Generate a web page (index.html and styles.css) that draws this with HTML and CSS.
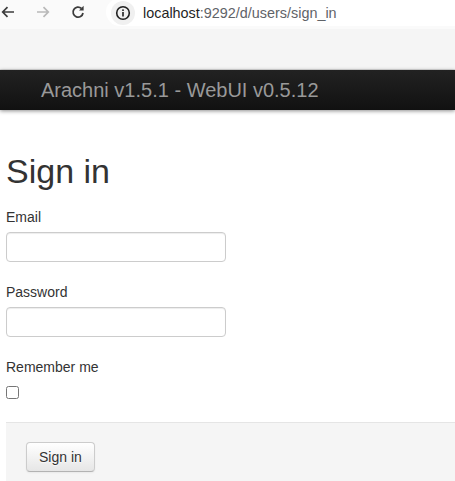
FILE: index.html
```html
<!DOCTYPE html>
<html lang="en">
<head>
<meta charset="utf-8">
<title>Sign in</title>
<link rel="stylesheet" href="styles.css">
</head>
<body>
<div class="toolbar">
  <div class="nav-buttons">
    <svg class="ico" width="16" height="16" viewBox="0 0 16 16"><path d="M14 8H3M7.5 3.2L2.7 8l4.8 4.8" fill="none" stroke="#3c3c3c" stroke-width="1.7"/></svg>
    <svg class="ico fwd" width="16" height="16" viewBox="0 0 16 16"><path d="M2 8h11M8.5 3.2L13.3 8l-4.8 4.8" fill="none" stroke="#b9b9b9" stroke-width="1.7"/></svg>
    <svg class="ico" width="16" height="16" viewBox="0 0 16 16"><path d="M13 9a5 5 0 1 1-1.6-4.6" fill="none" stroke="#3c3c3c" stroke-width="1.8"/><path d="M13.6 1.8v4.6H9z" fill="#3c3c3c"/></svg>
  </div>
  <div class="omnibox">
    <span class="info"><svg width="16" height="16" viewBox="0 0 16 16"><circle cx="8" cy="8" r="6.3" fill="none" stroke="#1f1f1f" stroke-width="1.6"/><rect x="7.2" y="7" width="1.6" height="4.5" fill="#1f1f1f"/><rect x="7.2" y="4.4" width="1.6" height="1.6" fill="#1f1f1f"/></svg></span>
    <span class="url"><span class="host">localhost</span>:9292/d/users/sign_in</span>
  </div>
</div>
<div class="topband"></div>
<div class="navbar">
  <span class="brand">Arachni v1.5.1 - WebUI v0.5.12</span>
</div>
<main class="content">
  <h1 class="title">Sign in</h1>
  <form class="form">
    <div class="group">
      <label class="label" for="email">Email</label>
      <input class="input" id="email" type="email">
    </div>
    <div class="group">
      <label class="label" for="password">Password</label>
      <input class="input" id="password" type="password">
    </div>
    <div class="group">
      <label class="label" for="remember">Remember me</label>
      <input class="check" id="remember" type="checkbox">
    </div>
    <div class="actions">
      <button class="btn" type="button">Sign in</button>
    </div>
  </form>
</main>
</body>
</html>
```
FILE: styles.css
```css
html, body {
  margin: 0;
  padding: 0;
  background: #fff;
  overflow: hidden;
}
body {
  font-family: "Liberation Sans", Arial, sans-serif;
  color: #333;
  font-size: 14px;
  line-height: 20px;
}
.toolbar {
  height: 29px;
  background: #fafafa;
  display: flex;
  align-items: flex-start;
}
.nav-buttons {
  display: flex;
  gap: 19px;
  padding: 4px 0 0 0;
  width: 106px;
  box-sizing: border-box;
}
.ico {
  display: block;
}
.omnibox {
  flex: 1;
  height: 28px;
  background: #fff;
  border-radius: 14px 0 0 14px;
  display: flex;
  align-items: center;
  margin-top: -2px;
}
.info {
  width: 24px;
  height: 24px;
  border-radius: 50%;
  background: #f0f0f0;
  display: flex;
  align-items: center;
  justify-content: center;
  margin-left: 5px;
  margin-top: 2px;
}
.info svg { display: block; }
.url {
  margin-left: 8px;
  margin-top: 2px;
  font-size: 14.4px;
  color: #5f6368;
}
.host { color: #1f1f1f; }
.topband {
  height: 40px;
  background: #f5f5f5;
  border-bottom: 1px solid #dcdcdc;
}
.navbar {
  position: relative;
  height: 40px;
  background: linear-gradient(#222, #111);
  box-shadow: 0 1px 4px rgba(0, 0, 0, 0.45);
  padding: 0 0 0 41px;
}
.brand {
  display: block;
  padding: 10px 0;
  font-size: 20px;
  line-height: 20px;
  font-weight: 200;
  color: #999;
}
.content {
  padding: 41px 0 0 6px;
}
.title {
  margin: 0;
  font-size: 34px;
  line-height: 40px;
  font-weight: normal;
  color: #333;
}
.form {
  margin: 16px 0 0;
}
.group {
  margin-bottom: 20px;
}
.label {
  display: block;
  margin-bottom: 5px;
}
.input {
  display: block;
  box-sizing: border-box;
  width: 220px;
  height: 30px;
  margin: 0;
  padding: 4px 6px;
  border: 1px solid #ccc;
  border-radius: 4px;
  box-shadow: inset 0 1px 1px rgba(0, 0, 0, 0.075);
  font: inherit;
}
.check {
  display: block;
  width: 13px;
  height: 13px;
  margin: 9px 0 0 0;
}
.group:nth-child(3) {
  margin-bottom: 23px;
}
.actions {
  background: #f5f5f5;
  border-top: 1px solid #e5e5e5;
  padding: 19px 20px 20px;
}
.btn {
  display: block;
  box-sizing: border-box;
  height: 30px;
  padding: 4px 12px;
  font: inherit;
  color: #333;
  text-shadow: 0 1px 1px rgba(255, 255, 255, 0.75);
  background: linear-gradient(#fff, #e6e6e6);
  border: 1px solid #ccc;
  border-bottom-color: #b3b3b3;
  border-radius: 4px;
  box-shadow: inset 0 1px 0 rgba(255, 255, 255, 0.2), 0 1px 2px rgba(0, 0, 0, 0.05);
}
```
